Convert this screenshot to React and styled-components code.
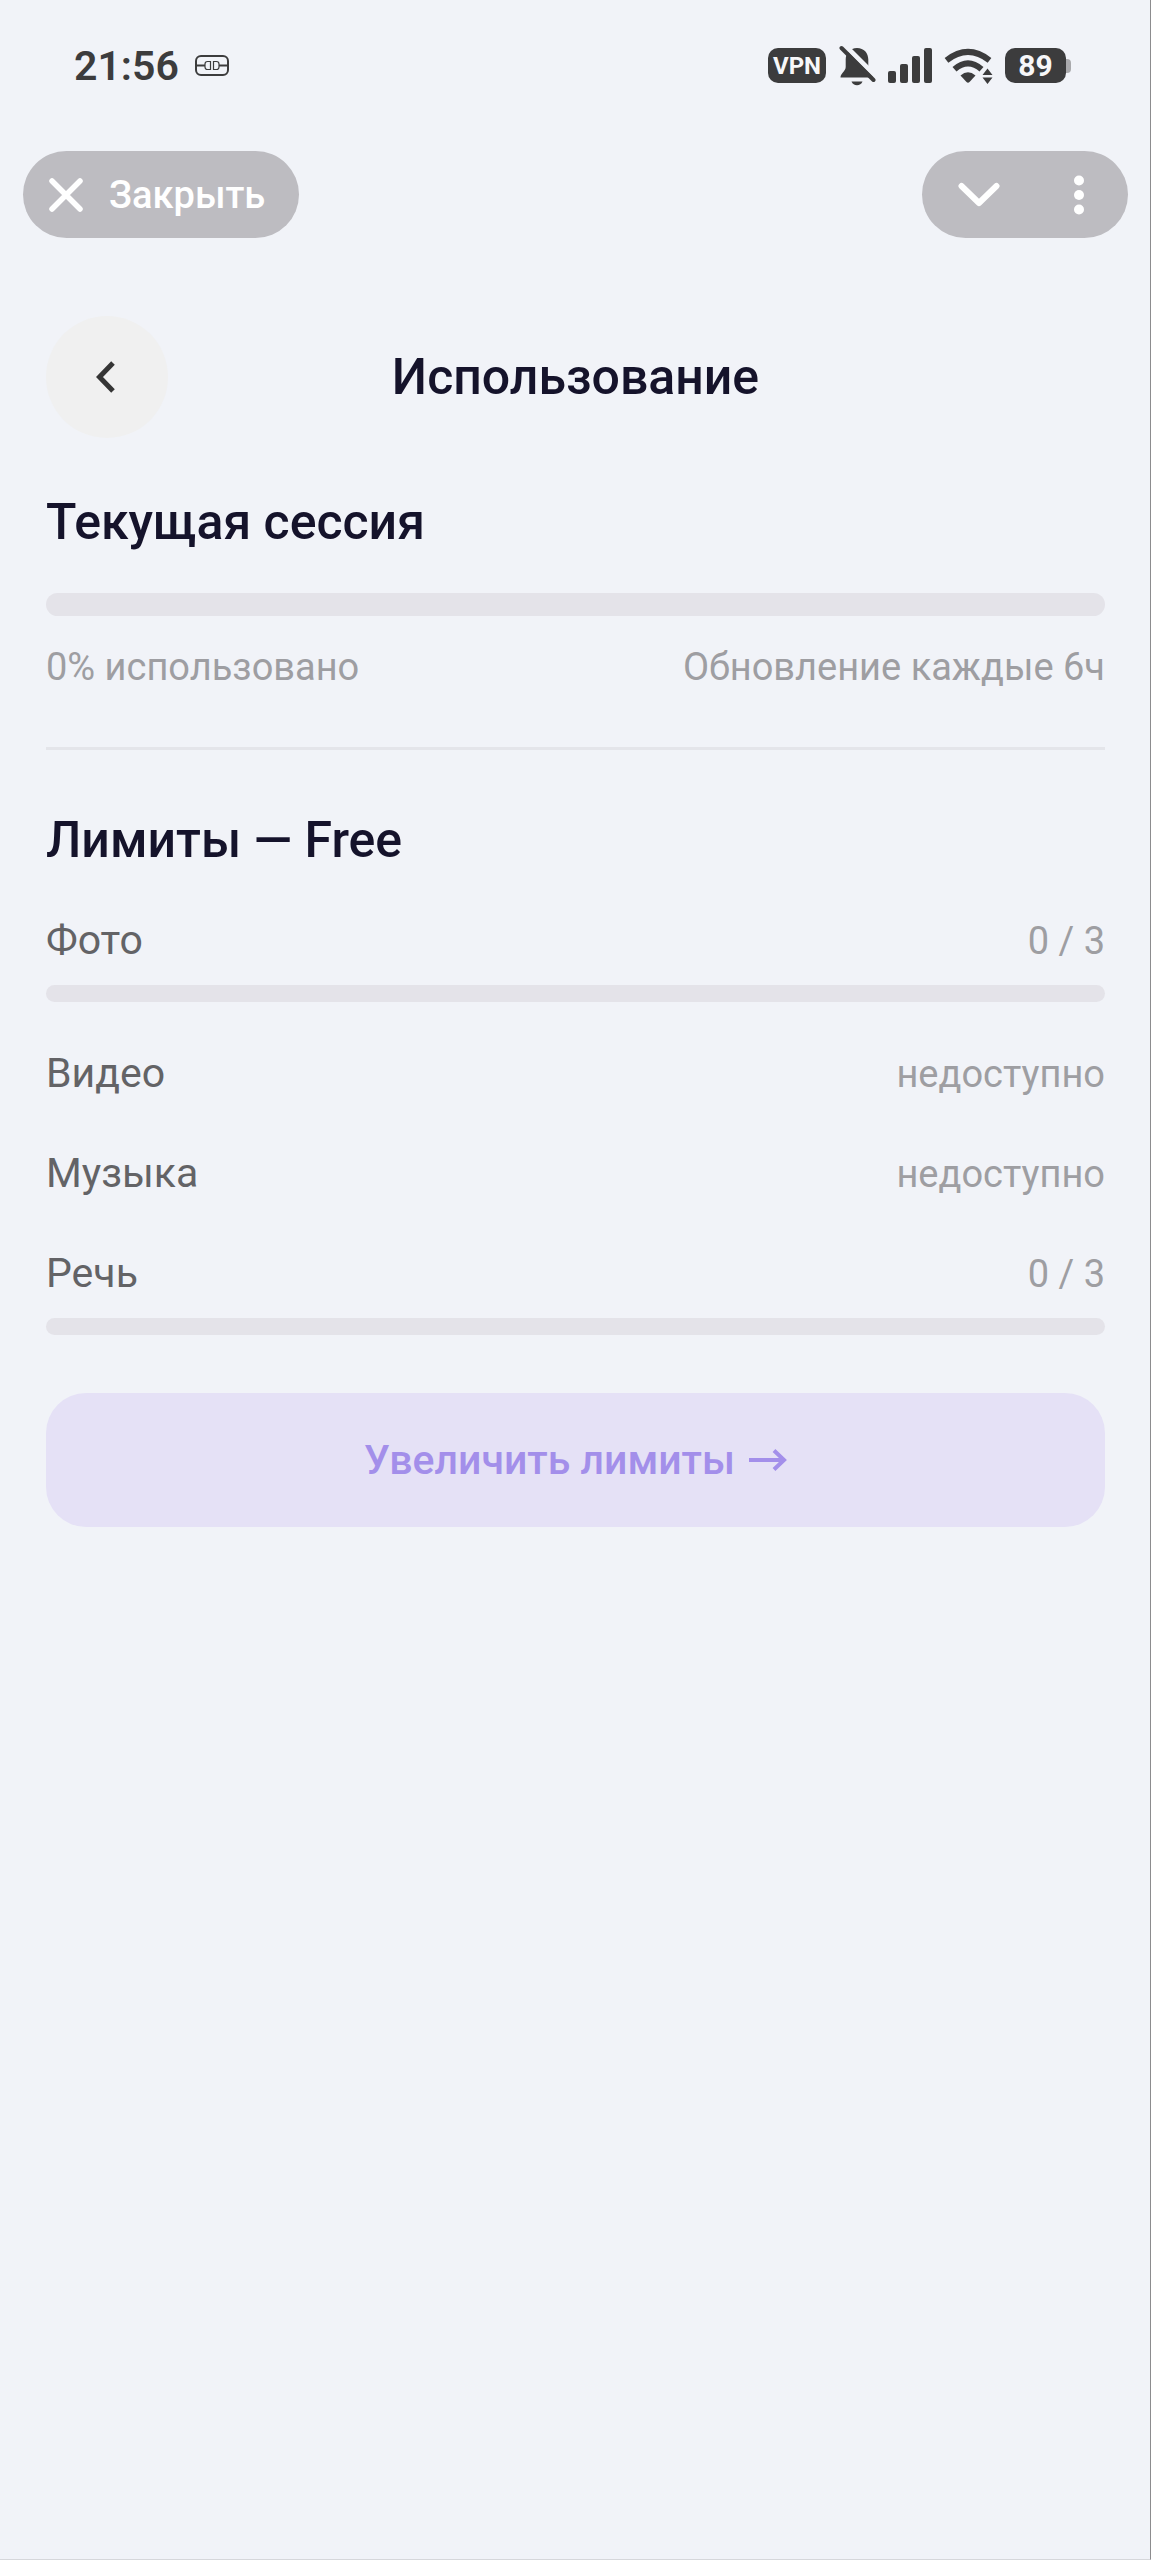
import React from 'react'
import styled, { createGlobalStyle, ThemeProvider } from 'styled-components'

const theme = {
  background: '#f1f3f8',
  status: '#3c3c3d',
  pill: '#bdbcc1',
  heading: '#15132b',
  label: '#636366',
  muted: '#9e9ea2',
  track: '#e4e3e9',
  accent: '#a38fea',
  accentSoft: '#e5e1f6',
}

const GlobalStyle = createGlobalStyle`
  *, *::before, *::after {
    box-sizing: border-box;
  }
  body {
    margin: 0;
    background: #f1f3f8;
    font-family: Roboto, 'Noto Sans', sans-serif;
  }
  button {
    margin: 0;
    padding: 0;
    border: 0;
    font-family: inherit;
    cursor: pointer;
  }
  svg {
    display: block;
    flex: none;
  }
`

const Screen = styled.div`
  min-height: 100vh;
  border-right: 1px solid #8c8c8e;
  border-bottom: 1px solid #d6d7db;
  background: ${props => props.theme.background};
`

const StatusBar = styled.header`
  display: flex;
  align-items: center;
  justify-content: space-between;
  height: 131px;
  padding: 0 79px 0 74px;
  color: ${props => props.theme.status};
`

const StatusGroup = styled.div`
  display: flex;
  align-items: center;
  gap: ${props => props.$gap}px;
`

const Clock = styled.time`
  font-size: 41px;
  line-height: 48px;
  font-weight: 600;
`

const Badge = styled.span`
  display: flex;
  align-items: center;
  justify-content: center;
  width: ${props => props.$width}px;
  height: 35px;
  border-radius: 10px;
  background: ${props => props.theme.status};
  color: #f7f7f9;
  font-size: ${props => props.$size}px;
  line-height: 36px;
  font-weight: 700;
`

const Battery = styled.div`
  display: flex;
  align-items: center;
  &::after {
    content: '';
    width: 5px;
    height: 14px;
    border-radius: 0 4px 4px 0;
    background: #a9a9ac;
  }
`

const AppControls = styled.nav`
  display: flex;
  justify-content: space-between;
  padding: 20px 22px 0 23px;
`

const ClosePill = styled.button`
  display: flex;
  align-items: center;
  gap: 26px;
  height: 87px;
  padding: 0 34px 0 26px;
  border-radius: 44px;
  background: ${props => props.theme.pill};
  color: #fff;
  font-size: 38px;
  line-height: 44px;
  font-weight: 500;
`

const PillGroup = styled.div`
  display: flex;
  height: 87px;
  padding-left: 6px;
  border-radius: 44px;
  background: ${props => props.theme.pill};
`

const PillButton = styled.button`
  display: flex;
  align-items: center;
  justify-content: center;
  width: ${props => props.$width}px;
  background: none;
  color: #fff;
`

const Content = styled.main`
  padding: 78px 45px 0 46px;
`

const TitleBar = styled.div`
  display: grid;
  grid-template-columns: 122px 1fr 122px;
  align-items: center;
`

const BackButton = styled.button`
  display: flex;
  align-items: center;
  justify-content: center;
  width: 122px;
  height: 122px;
  border-radius: 50%;
  background: #f0f0f0;
  color: #353535;
`

const Title = styled.h1`
  margin: 0;
  color: ${props => props.theme.heading};
  font-size: 50px;
  line-height: 60px;
  font-weight: 500;
  text-align: center;
`

const Section = styled.section`
  padding-top: ${props => props.$top}px;
`

const SectionTitle = styled.h2`
  margin: 0;
  color: ${props => props.theme.heading};
  font-size: 50px;
  line-height: 60px;
  font-weight: 500;
`

const Track = styled.div`
  height: ${props => (props.$thin ? 17 : 23)}px;
  border-radius: 12px;
  background: ${props => props.theme.track};
  overflow: hidden;
`

const Fill = styled.div`
  height: 100%;
  background: ${props => props.theme.accent};
`

const SessionTrack = styled.div`
  margin: 41px 0 23px;
`

const Row = styled.div`
  display: flex;
  align-items: baseline;
  justify-content: space-between;
`

const Note = styled.span`
  color: ${props => props.theme.muted};
  font-size: 38px;
  line-height: 56px;
  font-weight: 400;
`

const Label = styled.span`
  color: ${props => props.theme.label};
  font-size: 41px;
  line-height: 56px;
  font-weight: 400;
`

const Divider = styled.hr`
  height: 3px;
  margin: 52px 0 0;
  border: 0;
  background: #e4e5ea;
`

const LimitList = styled.ul`
  display: flex;
  flex-direction: column;
  gap: 43px;
  margin: 42px 0 58px;
  padding: 0;
  list-style: none;
`

const Limit = styled.li`
  display: flex;
  flex-direction: column;
  gap: 16px;
`

const UpgradeButton = styled.button`
  display: flex;
  align-items: center;
  justify-content: center;
  gap: 14px;
  width: 100%;
  height: 134px;
  border-radius: 40px;
  background: ${props => props.theme.accentSoft};
  color: ${props => props.theme.accent};
  font-size: 41px;
  line-height: 56px;
  font-weight: 500;
`

const PlugIcon = () => (
  <svg width="34" height="21" viewBox="0 0 34 21" fill="none" stroke="currentColor">
    <rect x="1" y="1" width="32" height="19" rx="5" strokeWidth="2" />
    <path d="M1 10.500h9M24 10.500h9" strokeWidth="2" />
    <path d="M15.500 6.500h-3a2.500 2.500 0 0 0-2.500 2.500v3a2.500 2.500 0 0 0 2.500 2.500h3zM18.500 6.500h3a2.500 2.500 0 0 1 2.500 2.500v3a2.500 2.500 0 0 1-2.500 2.500h-3z" strokeWidth="1.200" />
  </svg>
)

const MutedBellIcon = () => (
  <svg width="38" height="42" viewBox="-1 0 38 42">
    <path fill="currentColor" d="M18 3C11 3 6.700 8 6.700 14.500V22C6.700 26 1.500 28.500 1.500 32.500h33C34.500 28.500 29.300 26 29.300 22V14.500C29.300 8 25 3 18 3z" />
    <path fill="currentColor" d="M12.500 36.500h11c-1 2.500-3 3.700-5.500 3.700S13.500 39 12.500 36.500z" />
    <path stroke="#f1f3f8" strokeWidth="5" d="M4 -1.500L41 35.500" />
    <path stroke="currentColor" strokeWidth="4" strokeLinecap="round" d="M2.500 3L34.500 35" />
  </svg>
)

const SignalIcon = () => (
  <svg width="44" height="35" viewBox="0 0 44 35" fill="currentColor">
    <rect x="0" y="23" width="8" height="12" rx="2" />
    <rect x="12" y="16" width="8" height="19" rx="2" />
    <rect x="24" y="8" width="8" height="27" rx="2" />
    <rect x="36" y="0" width="8" height="35" rx="2" />
  </svg>
)

const WifiIcon = () => (
  <svg width="49" height="36" viewBox="0 0 49 36" fill="none">
    <path stroke="currentColor" strokeWidth="6" d="M2.500 12.300Q24 -4.500 45.500 12.300" />
    <path stroke="currentColor" strokeWidth="6" d="M10.500 21.300Q24 9.500 37.500 21.300" />
    <path fill="currentColor" d="M16.500 27.500Q24 21 31.500 27.500L25.500 34Q24 35.500 22.500 34z" />
    <path fill="currentColor" d="M43.500 20.500L48.500 27H38.500zM43.500 36L48.500 29.500H38.500z" />
  </svg>
)

const CloseIcon = () => (
  <svg width="34" height="34" viewBox="0 0 34 34" fill="none" stroke="currentColor" strokeWidth="5.500" strokeLinecap="round">
    <path d="M3 3L31 31M31 3L3 31" />
  </svg>
)

const ChevronDownIcon = () => (
  <svg width="42" height="26" viewBox="0 0 42 26" fill="none" stroke="currentColor" strokeWidth="6" strokeLinecap="round" strokeLinejoin="round">
    <path d="M3.500 4L21 21L38.500 4" />
  </svg>
)

const DotsIcon = () => (
  <svg width="10" height="40" viewBox="0 0 10 40" fill="currentColor">
    <circle cx="5" cy="5.500" r="5" />
    <circle cx="5" cy="20" r="5" />
    <circle cx="5" cy="34.500" r="5" />
  </svg>
)

const ChevronLeftIcon = () => (
  <svg width="22" height="32" viewBox="0 0 22 32" fill="none" stroke="currentColor" strokeWidth="5">
    <path d="M17 2L3.500 16L17 30" />
  </svg>
)

const ArrowIcon = () => (
  <svg width="38" height="22" viewBox="0 0 38 22" fill="none" stroke="currentColor" strokeWidth="4">
    <path d="M0 11H35M25 1.500L35 11L25 20.500" />
  </svg>
)

const limits = [
  { name: 'Фото', used: 0, total: 3 },
  { name: 'Видео' },
  { name: 'Музыка' },
  { name: 'Речь', used: 0, total: 3 },
]

const Progress = ({ label, value, max, thin }) => (
  <Track role="progressbar" aria-label={label} aria-valuenow={value} aria-valuemin={0} aria-valuemax={max} $thin={thin}>
    <Fill style={{ width: `${(value / max) * 100}%` }} />
  </Track>
)

const App = () => {
  return (
    <ThemeProvider theme={theme}>
      <GlobalStyle />
      <Screen>
        <StatusBar>
          <StatusGroup $gap={16}>
            <Clock>21:56</Clock>
            <PlugIcon />
          </StatusGroup>
          <StatusGroup $gap={12}>
            <Badge $width={58} $size={24}>VPN</Badge>
            <MutedBellIcon />
            <SignalIcon />
            <WifiIcon />
            <Battery>
              <Badge $width={61} $size={30}>89</Badge>
            </Battery>
          </StatusGroup>
        </StatusBar>

        <AppControls>
          <ClosePill type="button">
            <CloseIcon />
            Закрыть
          </ClosePill>
          <PillGroup>
            <PillButton type="button" aria-label="Свернуть" $width={102}>
              <ChevronDownIcon />
            </PillButton>
            <PillButton type="button" aria-label="Меню" $width={98}>
              <DotsIcon />
            </PillButton>
          </PillGroup>
        </AppControls>

        <Content>
          <TitleBar>
            <BackButton type="button" aria-label="Назад">
              <ChevronLeftIcon />
            </BackButton>
            <Title>Использование</Title>
          </TitleBar>

          <Section $top={54}>
            <SectionTitle>Текущая сессия</SectionTitle>
            <SessionTrack>
              <Progress label="Текущая сессия" value={0} max={100} />
            </SessionTrack>
            <Row>
              <Note>0% использовано</Note>
              <Note>Обновление каждые 6ч</Note>
            </Row>
          </Section>

          <Divider />

          <Section $top={60}>
            <SectionTitle>Лимиты — Free</SectionTitle>
            <LimitList>
              {limits.map(({ name, used, total }) => (
                <Limit key={name}>
                  <Row>
                    <Label>{name}</Label>
                    <Note>{total ? `${used} / ${total}` : 'недоступно'}</Note>
                  </Row>
                  {total && <Progress label={name} value={used} max={total} thin />}
                </Limit>
              ))}
            </LimitList>
          </Section>

          <UpgradeButton type="button">
            Увеличить лимиты
            <ArrowIcon />
          </UpgradeButton>
        </Content>
      </Screen>
    </ThemeProvider>
  )
}

export default App
